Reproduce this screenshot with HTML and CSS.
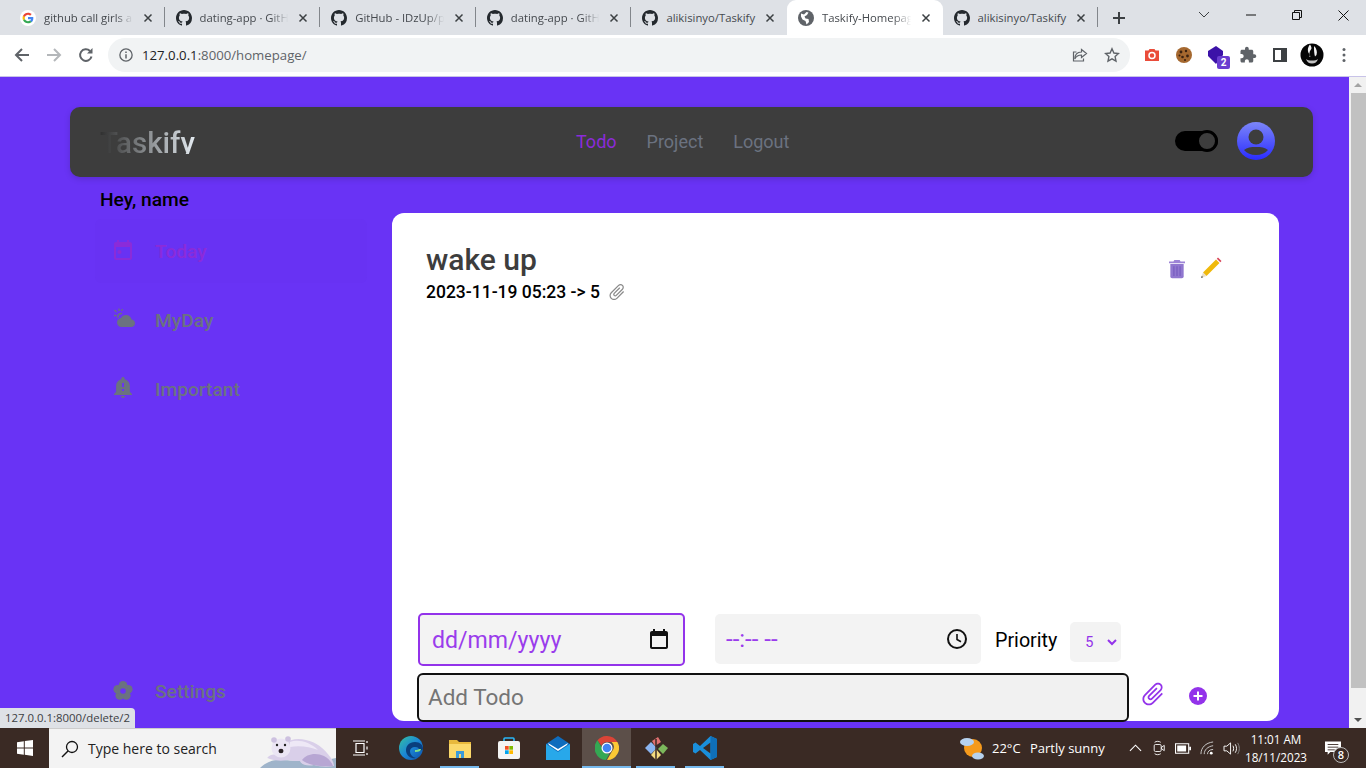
FILE: index.html
```html
<!DOCTYPE html>
<html lang="en">
<head>
    <meta charset="UTF-8">
    <title>Taskify-Homepage</title>
    <link rel="stylesheet" href="styles.css">
</head>
<body>
<svg class="defs" width="0" height="0">
    <symbol id="gh" viewBox="0 0 16 16"><path d="M8 0C3.58 0 0 3.58 0 8c0 3.54 2.29 6.53 5.47 7.59.4.07.55-.17.55-.41 0-.22-.01-.82-.01-1.49-2.01.37-2.53-.49-2.69-.94-.09-.23-.48-.94-.82-1.13-.28-.15-.68-.52-.01-.53.63-.01 1.08.58 1.23.82.72 1.21 1.87.87 2.33.66.07-.52.28-.87.51-1.07-1.78-.2-3.64-.89-3.64-3.95 0-.87.31-1.59.82-2.15-.08-.2-.36-1.02.08-2.12 0 0 .67-.21 2.2.82.64-.18 1.32-.27 2-.27.68 0 1.36.09 2 .27 1.53-1.04 2.2-.82 2.2-.82.44 1.1.16 1.92.08 2.12.51.56.82 1.27.82 2.15 0 3.07-1.87 3.75-3.65 3.95.29.25.54.73.54 1.48 0 1.07-.01 1.93-.01 2.2 0 .21.15.46.55.38A8.013 8.013 0 0016 8c0-4.42-3.58-8-8-8z"/></symbol>
    <symbol id="x" viewBox="0 0 10 10"><path d="M1.5 1.5l7 7M8.5 1.5l-7 7" stroke="currentColor" stroke-width="1.5" fill="none"/></symbol>
    <symbol id="clip" viewBox="0 0 24 24"><path transform="rotate(45 12 12)" d="M16.5 6v11.5c0 2.21-1.79 4-4 4s-4-1.79-4-4V5c0-1.38 1.12-2.5 2.5-2.5s2.5 1.12 2.5 2.5v10.5c0 .55-.45 1-1 1s-1-.45-1-1V6H10v9.5c0 1.38 1.12 2.5 2.5 2.5s2.5-1.12 2.5-2.5V5c0-2.21-1.79-4-4-4S7 2.79 7 5v12.5c0 3.04 2.46 5.5 5.5 5.5s5.5-2.46 5.5-5.5V6h-1.5z"/></symbol>
</svg>

<!-- browser chrome -->
<div class="tabstrip">
    <div class="tab">
        <svg class="favicon" viewBox="0 0 24 24"><circle cx="12" cy="12" r="12" fill="#fff"/><path d="M20 12.2c0-.6-.1-1.1-.2-1.6H12v3.1h4.5c-.2 1-.8 1.900-1.700 2.500l2.700 2.100c1.600-1.500 2.500-3.600 2.500-6.100z" fill="#4285f4"/><path d="M12 20c2.200 0 4-.7 5.500-2l-2.700-2.100c-.7.500-1.700.8-2.800.8-2.100 0-3.900-1.400-4.600-3.300L4.600 15.500C6 18.200 8.800 20 12 20z" fill="#34a853"/><path d="M7.400 13.400c-.4-1.100-.4-1.900 0-3L4.600 8.200c-.9 1.900-.9 5.400 0 7.300z" fill="#fbbc05"/><path d="M12 7.300c1.200 0 2.300.4 3.100 1.200l2.400-2.400C16 4.800 14.200 4 12 4 8.800 4 6 5.800 4.600 8.500l2.800 2.100c.7-1.900 2.500-3.300 4.600-3.300z" fill="#ea4335"/></svg>
        <span class="tab-title">github call girls a</span>
        <svg class="tab-x"><use href="#x"/></svg>
    </div>
    <div class="tab">
        <svg class="favicon"><use href="#gh"/></svg>
        <span class="tab-title">dating-app · GitHub</span>
        <svg class="tab-x"><use href="#x"/></svg>
    </div>
    <div class="tab">
        <svg class="favicon"><use href="#gh"/></svg>
        <span class="tab-title">GitHub - IDzUp/pro</span>
        <svg class="tab-x"><use href="#x"/></svg>
    </div>
    <div class="tab">
        <svg class="favicon"><use href="#gh"/></svg>
        <span class="tab-title">dating-app · GitHub</span>
        <svg class="tab-x"><use href="#x"/></svg>
    </div>
    <div class="tab tab-nosep">
        <svg class="favicon"><use href="#gh"/></svg>
        <span class="tab-title tab-title-full">alikisinyo/Taskify</span>
        <svg class="tab-x"><use href="#x"/></svg>
    </div>
    <div class="tab tab-active">
        <svg class="favicon" viewBox="0 0 16 16"><circle cx="8" cy="8" r="8" fill="#5f6368"/><path d="M3 3.500l3 1 2.500-2.500 2 .5-1.500 2.500-2.500 1.500 1 2 3 .5 .5 3-2.500 2.500-1-3.500-3-1.500-1.500-3z" fill="#fff"/></svg>
        <span class="tab-title">Taskify-Homepage</span>
        <svg class="tab-x"><use href="#x"/></svg>
    </div>
    <div class="tab">
        <svg class="favicon"><use href="#gh"/></svg>
        <span class="tab-title tab-title-full">alikisinyo/Taskify</span>
        <svg class="tab-x"><use href="#x"/></svg>
    </div>
    <svg class="newtab" viewBox="0 0 14 14"><path d="M7 1v12M1 7h12" stroke="#3c4043" stroke-width="2"/></svg>
    <div class="winctl">
        <span class="winbtn winbtn-chevron"><svg viewBox="0 0 12 8" width="12" height="8"><path d="M1 1l5 5 5-5" fill="none" stroke="#3c4043"/></svg></span>
        <span class="winbtn"><svg viewBox="0 0 10 10" width="10" height="10"><path d="M0 5h10" stroke="#111"/></svg></span>
        <span class="winbtn"><svg viewBox="0 0 10 10" width="10" height="10"><path d="M.5 2.500h7v7h-7zM2.500 2.500v-2h7v7h-2" fill="none" stroke="#111"/></svg></span>
        <span class="winbtn"><svg viewBox="0 0 11 11" width="11" height="11"><path d="M.5.5l10 10M10.500.5l-10 10" stroke="#111"/></svg></span>
    </div>
</div>

<div class="toolbar">
    <span class="navbtn"><svg viewBox="0 0 16 16" width="16" height="16"><path d="M15 8H2.500M8 2L2 8l6 6" fill="none" stroke="#5f6368" stroke-width="2"/></svg></span>
    <span class="navbtn"><svg viewBox="0 0 16 16" width="16" height="16"><path d="M1 8h12.500M8 2l6 6-6 6" fill="none" stroke="#b4b7ba" stroke-width="2"/></svg></span>
    <span class="navbtn"><svg viewBox="0 0 16 16" width="16" height="16"><path d="M13.500 9.500A5.800 5.800 0 1 1 12 4" fill="none" stroke="#5f6368" stroke-width="2"/><path d="M14.500 1v5.500H9z" fill="#5f6368"/></svg></span>
    <div class="omnibox">
        <svg class="omni-info" viewBox="0 0 16 16" width="14" height="14"><circle cx="8" cy="8" r="7" fill="none" stroke="#5f6368" stroke-width="1.500"/><path d="M8 7v5M8 4v1.800" stroke="#5f6368" stroke-width="1.700"/></svg>
        <span class="url"><b>127.0.0.1</b>:8000/homepage/</span>
        <svg class="omni-share" viewBox="0 0 16 16" width="16" height="16"><path d="M9.500 2.500l5 4-5 4V8C6 8 4 9.500 2.800 12c0-4 2.500-6.800 6.700-7z" fill="none" stroke="#5f6368" stroke-width="1.200"/><path d="M11.500 11.500v2.500H1.500V5h3" fill="none" stroke="#5f6368" stroke-width="1.200"/></svg>
        <svg class="omni-star" viewBox="0 0 16 16" width="16" height="16"><path d="M8 1.800l1.900 4.200 4.600.5-3.400 3.100.9 4.600L8 11.900l-4 2.300.9-4.600-3.400-3.100 4.600-.5z" fill="none" stroke="#5f6368" stroke-width="1.400"/></svg>
    </div>
    <div class="extensions">
        <span class="ext"><svg viewBox="0 0 16 16" width="16" height="16"><path d="M1 3.500h3.500L5.500 2h5l1 1.500H15V14H1z" fill="#ea4c3a"/><circle cx="8" cy="8.500" r="3" fill="none" stroke="#fff" stroke-width="1.500"/></svg></span>
        <span class="ext"><svg viewBox="0 0 18 18" width="18" height="18"><circle cx="9" cy="9" r="8" fill="#a5682f"/><circle cx="6" cy="6" r="1.400" fill="#3b2210"/><circle cx="11" cy="5" r="1.200" fill="#3b2210"/><circle cx="12.500" cy="10" r="1.400" fill="#3b2210"/><circle cx="7.500" cy="11" r="1.300" fill="#3b2210"/><circle cx="10" cy="14" r="1" fill="#3b2210"/><circle cx="4.500" cy="9.500" r="1" fill="#3b2210"/></svg></span>
        <span class="ext ext-badged">
            <svg viewBox="0 0 18 18" width="18" height="18"><path d="M9 0l7 5v4l-7 9-8-8V5z" fill="#3c12a8"/></svg>
            <span class="ext-badge">2</span>
        </span>
        <span class="ext"><svg viewBox="0 0 24 24" width="18" height="18"><path d="M20.500 11H19V7c0-1.100-.9-2-2-2h-4V3.500C13 2.120 11.880 1 10.500 1S8 2.120 8 3.500V5H4c-1.100 0-2 .9-2 2v3.800h1.500c1.490 0 2.700 1.210 2.700 2.700s-1.210 2.700-2.700 2.700H2V20c0 1.100.9 2 2 2h3.800v-1.500c0-1.490 1.210-2.700 2.700-2.700s2.700 1.210 2.700 2.700V22H17c1.100 0 2-.9 2-2v-4h1.500c1.380 0 2.500-1.120 2.500-2.500S21.880 11 20.500 11z" fill="#5f6368"/></svg></span>
        <span class="ext"><svg viewBox="0 0 14 14" width="14" height="14"><path d="M1 1h12v12H1z" fill="none" stroke="#3c4043" stroke-width="2"/><path d="M8 1h5v12H8z" fill="#3c4043"/></svg></span>
        <span class="ext"><svg viewBox="0 0 24 24" width="24" height="24"><circle cx="12" cy="12" r="11.500" fill="#050505"/><path d="M10 1.500C7 5 7.500 9 9.500 11c1.200 1.200.6 2.500-.7 3h1.700C8.800 11 9.500 8 11 6.500c1-1 .5-3-1-5z" fill="#f2f2f2"/><path d="M14 3c2.500 2 3.500 6 2.500 9l-1.500 1.500c-1-3-1-7-1-10.500z" fill="#f2f2f2"/><path d="M6 16c1.500 1 3 1.500 6 1.500s4.500-.5 6-1.500c-1 3-3 4.500-6 4.500S7 19 6 16z" fill="#c4c4c4"/></svg></span>
        <span class="ext"><svg viewBox="0 0 4 16" width="4" height="16"><circle cx="2" cy="2.500" r="1.500" fill="#5f6368"/><circle cx="2" cy="8" r="1.500" fill="#5f6368"/><circle cx="2" cy="13.500" r="1.500" fill="#5f6368"/></svg></span>
    </div>
</div>

<!-- the page itself -->
<div class="viewport">
    <div class="app">
        <nav class="navbar">
            <div class="brand">Taskify</div>
            <div class="nav-links">
                <a class="nav-link nav-link-active">Todo</a>
                <a class="nav-link">Project</a>
                <a class="nav-link">Logout</a>
            </div>
            <div class="nav-right">
                <span class="toggle"><span class="knob"></span></span>
                <svg class="avatar" viewBox="0 0 38 38" width="38" height="38">
                    <defs><linearGradient id="av" x1="0" y1="0" x2="0" y2="1"><stop offset="0" stop-color="#7c86f8"/><stop offset="1" stop-color="#2a2cff"/></linearGradient></defs>
                    <circle cx="19" cy="19" r="19" fill="url(#av)"/>
                    <circle cx="19" cy="15" r="7.500" fill="#3d3d3d"/>
                    <path d="M7 28c3-2.500 7-3 12-3s9 .5 12 3c-3 3.500-7 5-12 5s-9-1.500-12-5z" fill="#3d3d3d"/>
                </svg>
            </div>
        </nav>

        <div class="content">
            <aside class="sidebar">
                <div class="greeting">Hey, name</div>
                <div class="side-item side-item-active">
                    <svg class="side-icon" viewBox="0 0 24 24"><path d="M19 3h-1V1h-2v2H8V1H6v2H5c-1.110 0-1.990.9-1.990 2L3 19c0 1.100.89 2 2 2h14c1.100 0 2-.9 2-2V5c0-1.100-.9-2-2-2zm0 16H5V8h14v11z"/><circle cx="8.500" cy="13" r="2"/></svg>
                    <span>Today</span>
                </div>
                <div class="side-item">
                    <svg class="side-icon" viewBox="0 0 24 24"><path transform="translate(6 4) scale(.75)" d="M19.350 10.040C18.670 6.590 15.640 4 12 4 9.110 4 6.600 5.640 5.350 8.040 2.340 8.360 0 10.910 0 14c0 3.310 2.690 6 6 6h13c2.760 0 5-2.240 5-5 0-2.640-2.050-4.780-4.650-4.960z"/><path d="M8 .5V3M3.500 2l2 2M3 7.500h2.500M11.500 1l-1 2" stroke="currentColor" stroke-width="1.300" fill="none"/><path d="M7 10a3.500 3.500 0 0 1 4-4.500" stroke="currentColor" stroke-width="1.500" fill="none"/></svg>
                    <span>MyDay</span>
                </div>
                <div class="side-item">
                    <svg class="side-icon" viewBox="0 2 24 24"><path d="M10.010 21.010c0 1.100.89 1.990 1.990 1.990s1.990-.89 1.990-1.990h-3.980zm8.870-4.190V11c0-3.250-2.250-5.970-5.290-6.690v-.72C13.590 2.710 12.880 2 12 2s-1.590.71-1.590 1.590v.72C7.370 5.030 5.120 7.750 5.120 11v5.820L3 18.940V20h18v-1.060l-2.120-2.120zM13 16h-2v-2h2v2zm0-4h-2V8h2v4z"/></svg>
                    <span>Important</span>
                </div>
                <div class="side-item side-item-bottom">
                    <svg class="side-icon" viewBox="0 0 24 24"><circle cx="12" cy="6.400" r="4.300"/><circle cx="17.300" cy="10.300" r="4.300"/><circle cx="15.300" cy="16.500" r="4.300"/><circle cx="8.700" cy="16.500" r="4.300"/><circle cx="6.700" cy="10.300" r="4.300"/><circle cx="12" cy="12" r="5"/><circle cx="12" cy="12" r="2.800" fill="#6933f5"/></svg>
                    <span>Settings</span>
                </div>
            </aside>

            <main class="card">
                <div class="todo-list">
                    <div class="todo">
                        <div class="todo-text">
                            <h2 class="todo-title">wake up</h2>
                            <div class="todo-meta">
                                <span>2023-11-19 05:23 -&gt; 5</span>
                                <svg class="todo-clip"><use href="#clip"/></svg>
                            </div>
                        </div>
                        <div class="todo-actions">
                            <svg viewBox="0 0 18 22" width="16" height="21"><path d="M6 1.500h6l1 1.500h5v2H0V3h5z" fill="#9d84d6"/><path d="M1.500 6h15v14a2 2 0 0 1-2 2h-11a2 2 0 0 1-2-2z" fill="#9077cf"/><path d="M5.500 8.500v11M9 8.500v11M12.500 8.500v11" stroke="#7a5fc0" stroke-width="1.500"/></svg>
                            <svg viewBox="0 0 22 22" width="22" height="22"><path d="M16 2.500l3.500 3.500L6.500 19 3 15.500z" fill="#f0b90b"/><path d="M16.800 1.700l3.500 3.500 1.200-1.200-3.500-3.500z" fill="#d8475a"/><path d="M3 15.500L1 21l5.500-2z" fill="#eadfc8"/><path d="M1.800 18.800L1 21l2.200-.8z" fill="#555"/></svg>
                        </div>
                    </div>
                </div>

                <form class="todo-form">
                    <div class="form-row">
                        <div class="field field-date">
                            <span class="field-text">dd/mm/yyyy</span>
                            <svg viewBox="0 0 24 24" width="24" height="24"><path d="M19 3h-1V1h-2v2H8V1H6v2H5c-1.110 0-2 .9-2 2v14c0 1.100.89 2 2 2h14c1.100 0 2-.9 2-2V5c0-1.100-.9-2-2-2zm0 16H5V8h14v11z" fill="#111"/></svg>
                        </div>
                        <div class="field field-time">
                            <span>--:-- --</span>
                            <svg viewBox="0 0 24 24" width="24" height="24"><circle cx="12" cy="12" r="9" fill="none" stroke="#111" stroke-width="2"/><path d="M12 7v5.500l4 2.300" fill="none" stroke="#111" stroke-width="1.600"/></svg>
                        </div>
                        <label class="priority-label">Priority</label>
                        <div class="priority-select">
                            <span>5</span>
                            <svg viewBox="0 0 10 7" width="10" height="7"><path d="M1 1l4 4 4-4" fill="none" stroke="#9333ea" stroke-width="2"/></svg>
                        </div>
                    </div>
                    <div class="form-row form-row-add">
                        <input class="add-input" type="text" placeholder="Add Todo">
                        <svg class="add-clip"><use href="#clip"/></svg>
                        <svg class="add-plus" viewBox="0 0 20 20" width="20" height="20"><circle cx="10" cy="10" r="9" fill="#9333ea"/><path d="M10 5.500v9M5.500 10h9" stroke="#fff" stroke-width="2"/></svg>
                    </div>
                </form>
            </main>
        </div>
    </div>

    <div class="scrollbar">
        <span class="arrow arrow-up"></span>
        <span class="thumb"></span>
        <span class="arrow arrow-down"></span>
    </div>

    <div class="status-bubble">127.0.0.1:8000/delete/2</div>
</div>

<!-- windows taskbar -->
<div class="taskbar">
    <span class="start"><svg viewBox="0 0 16 16" width="16" height="16"><path d="M0 2.200L6.800 1.200v6.400H0zM7.800 1l8.200-1v7.600H7.800zM0 8.500h6.800v6.300L0 13.800zM7.800 8.500H16V16l-8.200-1.200z" fill="#fff"/></svg></span>
    <div class="search">
        <svg viewBox="0 0 18 18" width="18" height="18"><circle cx="11" cy="7" r="5.500" fill="none" stroke="#111" stroke-width="1.300"/><path d="M7 11l-6 6" stroke="#111" stroke-width="1.500"/></svg>
        <span class="search-text">Type here to search</span>
        <svg class="bear" viewBox="0 0 76 38" width="76" height="38">
            <path d="M0 38c6-6 14-9 24-8 16 1 32 3 52-2v10z" fill="#9fb4ca"/>
            <path d="M8 27c3-3 8-3 13-3l3-10c6-5 14-6 22-4 10 2 18 8 25 18 2 3 3 6 3 8-6 1-14 1-20-1-4 1-12 1-14-4-4 0-8 0-12-1-6 1-12 1-18-1-3-1-3-1-2-2z" fill="#d9cfe9"/>
            <path d="M42 30c4-6 14-8 22-4 4 2 7 5 9 10-10 1-24 0-31-6z" fill="#b7a6d3"/>
            <path d="M30 12c8-3 20 0 28 8-8-3-18-5-28-3z" fill="#eee8f6"/>
            <circle cx="21" cy="18" r="9.500" fill="#ebe5f4"/>
            <circle cx="14" cy="10" r="2.800" fill="#cdc1e0"/><circle cx="28" cy="9" r="2.800" fill="#cdc1e0"/>
            <circle cx="17" cy="15" r="1.200" fill="#222"/><circle cx="25" cy="15" r="1.200" fill="#222"/>
            <ellipse cx="21" cy="21" rx="2.500" ry="2.200" fill="#2a2226"/>
        </svg>
    </div>
    <span class="task task-view"><svg viewBox="0 0 16 16" width="16" height="16"><path d="M3 3.500h8v9H3zM0 1h12M0 15h12M14 1v2M14 6.500v3M14 13v2" fill="none" stroke="#fff" stroke-width="1.200"/></svg></span>
    <span class="task">
        <svg viewBox="0 0 24 24" width="24" height="24"><defs><linearGradient id="edge" x1="0" y1="0" x2="1" y2="1"><stop offset="0" stop-color="#35c1a0"/><stop offset=".5" stop-color="#1b87d6"/><stop offset="1" stop-color="#0c4fa8"/></linearGradient></defs><circle cx="12" cy="12" r="12" fill="url(#edge)"/><path d="M24 13c0-4-3-7-8-7-6 0-9 4-9 8 0 5 4 9 10 8-4-1-6-4-6-7 0-2 2-4 5-4s4 1 4 3c2 1 4 0 4-1z" fill="#0a3f7d"/><path d="M21 13c0 1-2 2-5 2" stroke="#7fe08a" stroke-width="2" fill="none"/></svg>
    </span>
    <span class="task task-on">
        <svg viewBox="0 0 24 20" width="24" height="20"><path d="M1 2h8l2 2h12v15a1 1 0 0 1-1 1H2a1 1 0 0 1-1-1z" fill="#e8b93c"/><path d="M1 6h22v13a1 1 0 0 1-1 1H2a1 1 0 0 1-1-1z" fill="#fbd96b"/><path d="M8 20v-7h8v7h-3v-4h-2v4z" fill="#3a9bd9"/></svg>
    </span>
    <span class="task">
        <svg viewBox="0 0 24 24" width="24" height="24"><path d="M7 6V3a1 1 0 0 1 1-1h8a1 1 0 0 1 1 1v3" fill="none" stroke="#29b6f6" stroke-width="1.600"/><rect x="1" y="5" width="22" height="18" rx="2" fill="#f4f4f4"/><path d="M8 10h3.700v3.700H8z" fill="#f25022"/><path d="M12.300 10H16v3.700h-3.700z" fill="#7fba00"/><path d="M8 14.300h3.700V18H8z" fill="#00a4ef"/><path d="M12.300 14.300H16V18h-3.700z" fill="#ffb900"/></svg>
    </span>
    <span class="task">
        <svg viewBox="0 0 24 24" width="24" height="24"><path d="M0 8L12 0l12 8v16H0z" fill="#0f6cbd"/><path d="M0 8l12 8 12-8v16H0z" fill="#28a8ea"/><path d="M2 7l10 6 10-6-1 2-9 6-9-6z" fill="#fff"/></svg>
    </span>
    <span class="task task-on task-active">
        <svg viewBox="0 0 24 24" width="24" height="24"><path d="M12 0a12 12 0 0 1 10.400 6H12a6 6 0 0 0-5.600 3.700L2.500 4.300A12 12 0 0 1 12 0z" fill="#db4437"/><path d="M22.400 6A12 12 0 0 1 12 24l5.200-9a6 6 0 0 0-.7-9z" fill="#fcc934"/><path d="M2.500 4.300L7 12a6 6 0 0 0 7.500 5.500L10.900 24A12 12 0 0 1 2.500 4.300z" fill="#34a853"/><circle cx="12" cy="12" r="5.500" fill="#fff"/><circle cx="12" cy="12" r="4.300" fill="#4285f4"/></svg>
    </span>
    <span class="task task-on">
        <svg viewBox="0 0 24 24" width="24" height="24"><path d="M1 12l6-6 6 6-6 6z" fill="#8ab4f0"/><path d="M11 10l-3-5 6-4 3 5z" fill="#e07070"/><path d="M14 13l5-5 5 4-5 6z" fill="#7cb85c"/><path d="M7 19l5-6 5 6-5 5z" fill="#f4dc80"/><path d="M12 3v21" stroke="#3a2a24" stroke-width="1.500"/></svg>
    </span>
    <span class="task task-on">
        <svg viewBox="0 0 24 24" width="24" height="24"><path d="M17.500 0L24 3v18l-6.500 3L7 14l-4.500 3.500L0 16V8l2.500-1.500L7 10z" fill="#1a8fdb"/><path d="M17.500 6.500L10 12l7.500 5.500z" fill="#3a2a24"/><path d="M17.500 0L24 3v18l-6.500 3z" fill="#0f6fb8"/></svg>
    </span>

    <div class="tray">
        <svg class="weather" viewBox="0 0 24 24" width="24" height="24"><circle cx="13" cy="12" r="9" fill="#f59a1c"/><ellipse cx="7" cy="6" rx="7" ry="4" fill="#b6d2ef"/><ellipse cx="18" cy="20" rx="6" ry="3.500" fill="#b6d2ef"/></svg>
        <span class="temp">22°C</span>
        <span class="weather-text">Partly sunny</span>
        <span class="tray-icon"><svg viewBox="0 0 14 8" width="13" height="8"><path d="M1 7l6-6 6 6" fill="none" stroke="#fff" stroke-width="1.200"/></svg></span>
        <span class="tray-icon"><svg viewBox="0 0 16 18" width="14" height="16"><rect x="2.500" y="5" width="8" height="8" rx="1.500" fill="none" stroke="#fff"/><path d="M11 8l3-2v6l-3-2zM3 2.500C5 1 8 1 10 2.500M3 15.500c2 1.500 5 1.500 7 0" fill="none" stroke="#fff"/></svg></span>
        <span class="tray-icon"><svg viewBox="0 0 18 12" width="16" height="11"><path d="M.6.6h14.800v10.800H.6z" fill="none" stroke="#fff" stroke-width="1.200"/><path d="M2.500 2.500h10v7h-10zM16 4h2v4h-2z" fill="#fff"/></svg></span>
        <span class="tray-icon"><svg viewBox="0 0 16 16" width="15" height="15"><path d="M1 14C1 7 6 2 14 1M4.500 14c0-4.500 3.500-8 9.500-9M8 14c0-2.500 2-5 6-5" fill="none" stroke="#cfcfcf" stroke-width="1"/><circle cx="12" cy="13" r="1.500" fill="#fff"/></svg></span>
        <span class="tray-icon"><svg viewBox="0 0 18 16" width="17" height="15"><path d="M1 5.500h3L8 2v12L4 10.500H1z" fill="none" stroke="#fff"/><path d="M10.500 5c1 1.500 1 4.500 0 6M13 3.500c1.800 2.500 1.800 6.500 0 9" fill="none" stroke="#fff"/><path d="M15.500 2c2.400 3.500 2.400 8.500 0 12" fill="none" stroke="#888"/></svg></span>
        <div class="clock"><span>11:01 AM</span><span>18/11/2023</span></div>
        <span class="notify">
            <svg viewBox="0 0 18 16" width="16" height="15"><path d="M0 0h18v12H6l-3 3v-3H0z" fill="#fff"/><path d="M3 3.500h12M3 6.500h12M3 9.500h8" stroke="#3a2a24"/></svg>
            <span class="notify-count">8</span>
        </span>
    </div>
</div>
</body>
</html>
```

FILE: styles.css
```css
/* Reset and base styles */
* {
    box-sizing: border-box;
    margin: 0;
    padding: 0;
}

html, body {
    width: 1366px;
    height: 768px;
    overflow: hidden;
}

body {
    display: flex;
    flex-direction: column;
    font-family: Roboto, "Noto Sans", sans-serif;
    background-color: #fff;
}

.defs {
    position: absolute;
}

/* Tab strip */
.tabstrip {
    display: flex;
    align-items: stretch;
    height: 35px;
    padding-left: 9px;
    background-color: #dee1e6;
    font-family: "Open Sans", sans-serif;
    font-size: 11.3px;
    color: #45494e;
}

.tab {
    position: relative;
    display: flex;
    align-items: center;
    width: 155.6px;
    padding: 0 11px 0 11px;
}

.tab::after {
    content: "";
    position: absolute;
    right: 0;
    top: 7px;
    height: 20px;
    width: 1px;
    background-color: #82868b;
}

.tab-nosep::after,
.tab-active::after {
    display: none;
}

.tab-active {
    background-color: #fff;
    border-radius: 9px 9px 0 0;
}

.favicon {
    flex: none;
    width: 16px;
    height: 16px;
    margin-right: 8px;
    fill: #24292e;
}

.tab-title {
    flex: 1;
    min-width: 0;
    white-space: nowrap;
    overflow: hidden;
    -webkit-mask-image: linear-gradient(to right, #000 78%, transparent 98%);
    mask-image: linear-gradient(to right, #000 78%, transparent 98%);
}

.tab-title-full {
    -webkit-mask-image: none;
    mask-image: none;
}

.tab-x {
    flex: none;
    width: 10px;
    height: 10px;
    margin: 0 1px 0 8px;
    color: #3c4043;
}

.newtab {
    align-self: center;
    width: 14px;
    height: 14px;
    margin-left: 14px;
}

.winctl {
    display: flex;
    margin-left: auto;
}

.winbtn {
    display: flex;
    align-items: center;
    justify-content: center;
    width: 46px;
    height: 30px;
}

.winbtn-chevron {
    margin-right: 1px;
}

/* Toolbar */
.toolbar {
    display: flex;
    align-items: center;
    height: 42px;
    padding: 0 6px 1px;
    border-bottom: 1px solid #c8c3e8;
    background-color: #fff;
}

.navbtn {
    display: flex;
    align-items: center;
    justify-content: center;
    width: 32px;
    height: 32px;
}

.omnibox {
    display: flex;
    align-items: center;
    width: 1022px;
    height: 34px;
    margin-left: 6px;
    padding: 0 10px 0 11px;
    border-radius: 17px;
    background-color: #f1f3f4;
}

.url {
    flex: 1;
    margin-left: 9px;
    font-family: "Open Sans", sans-serif;
    font-size: 13.2px;
    color: #5f6368;
}

.url b {
    font-weight: 400;
    color: #202124;
}

.omni-share {
    margin-right: 16px;
}

.extensions {
    display: flex;
    margin-left: 6px;
}

.ext {
    position: relative;
    display: flex;
    align-items: center;
    justify-content: center;
    width: 32px;
    height: 32px;
}

.ext-badge {
    position: absolute;
    right: 2px;
    bottom: 2px;
    width: 13px;
    height: 13px;
    border-radius: 2px;
    background-color: #6a3dd0;
    color: #fff;
    font-size: 10px;
    font-weight: 700;
    line-height: 13px;
    text-align: center;
}

/* Page area */
.viewport {
    position: relative;
    display: flex;
    flex: 1;
    min-height: 0;
    background-color: #6933f5;
}

.app {
    display: flex;
    flex-direction: column;
    flex: 1;
    min-width: 0;
    padding: 30px 36px 0 70px;
}

.navbar {
    display: flex;
    align-items: center;
    flex: none;
    height: 70px;
    padding: 0 38px 0 30px;
    border-radius: 10px;
    background-color: #3d3d3d;
    box-shadow: 0 2px 6px rgba(0, 0, 0, 0.15);
}

.brand {
    width: 96px;
    height: 24px;
    margin-right: 380px;
    overflow: hidden;
    font-size: 29.5px;
    font-weight: 500;
    line-height: 26px;
    white-space: nowrap;
    background-image: linear-gradient(to right, #2f2f2f, #e6edf3);
    -webkit-background-clip: text;
    background-clip: text;
    color: transparent;
}

.nav-links {
    display: flex;
    gap: 30px;
    margin-top: -2px;
}

.nav-link {
    font-size: 18px;
    color: #6b7280;
}

.nav-link-active {
    color: #8b2bd9;
}

.nav-right {
    display: flex;
    align-items: center;
    gap: 19px;
    margin-top: -2px;
    margin-left: auto;
}

.toggle {
    position: relative;
    display: block;
    width: 43px;
    height: 20px;
    border-radius: 10px;
    background-color: #000;
}

.knob {
    position: absolute;
    right: 0;
    top: -1px;
    width: 22px;
    height: 22px;
    border: 3px solid #000;
    border-radius: 50%;
    background-color: #3d3d3d;
}

.content {
    display: flex;
    flex: 1;
    min-height: 0;
}

/* Sidebar */
.sidebar {
    display: flex;
    flex-direction: column;
    flex: none;
    width: 322px;
    padding: 12px 25px 5px 25px;
}

.greeting {
    height: 30px;
    margin-left: 5px;
    font-size: 19.2px;
    font-weight: 500;
    line-height: 22px;
    color: #000;
}

.side-item {
    display: flex;
    align-items: center;
    gap: 20px;
    height: 64px;
    margin-bottom: 5px;
    padding-left: 16px;
    font-size: 19.2px;
    font-weight: 500;
    color: #6b7280;
}

.side-item-active {
    border-radius: 6px;
    background-color: #6832f3;
    color: #8b2bd9;
}

.side-item-bottom {
    margin-top: auto;
    margin-bottom: 0;
}

.side-icon {
    flex: none;
    width: 24px;
    height: 24px;
    fill: currentColor;
}

/* Main card */
.card {
    display: flex;
    flex-direction: column;
    flex: none;
    width: 887px;
    height: 508px;
    margin-top: 36px;
    border-radius: 12px;
    background-color: #fff;
}

.todo-list {
    flex: 1;
    padding: 29px 57px 0 34px;
}

.todo {
    display: flex;
    justify-content: space-between;
}

.todo-title {
    font-size: 30px;
    font-weight: 500;
    line-height: 35px;
    color: #3d3d3d;
}

.todo-meta {
    display: flex;
    align-items: center;
    gap: 7px;
    margin-top: 3px;
    font-size: 17.5px;
    font-weight: 500;
    line-height: 24px;
    color: #000;
}

.todo-clip {
    width: 20px;
    height: 20px;
    fill: #8a8a8a;
}

.todo-actions {
    display: flex;
    align-items: center;
    gap: 15px;
    height: 22px;
    margin-top: 15px;
}

/* Add todo form */
.todo-form {
    display: flex;
    flex-direction: column;
    gap: 7px;
    margin-bottom: -1px;
    padding-left: 25px;
}

.form-row {
    display: flex;
    align-items: center;
}

.field {
    display: flex;
    align-items: center;
    justify-content: space-between;
    border-radius: 5px;
    background-color: #f3f3f3;
    color: #9a3cec;
}

.field-date {
    width: 267px;
    height: 53px;
    margin-left: 1px;
    padding: 0 12px;
    border: 2px solid #9333ea;
    font-size: 23.1px;
}

.field-text {
    margin-top: 1px;
}

.field-time {
    align-self: flex-start;
    width: 266px;
    height: 50px;
    margin-top: 1px;
    margin-left: 30px;
    padding: 0 12px 0 11px;
    font-size: 24px;
}

.priority-label {
    margin-top: 2px;
    margin-left: 14px;
    font-size: 19.7px;
    color: #000;
}

.priority-select {
    display: flex;
    align-items: center;
    justify-content: space-between;
    width: 51px;
    height: 40px;
    margin: 5px 0 0 13px;
    padding: 0 4px 0 15px;
    border-radius: 5px;
    background-color: #f3f3f3;
    font-size: 14.5px;
    color: #9333ea;
}

.form-row-add {
    height: 49px;
}

.add-input {
    width: 712px;
    height: 49px;
    padding: 0 9px 2px;
    border: 2px solid #111;
    border-radius: 6px;
    outline: none;
    background-color: #f1f1f1;
    font-family: Roboto, sans-serif;
    font-size: 22.5px;
}

.add-input::placeholder {
    color: #757575;
}

.add-clip {
    width: 28px;
    height: 28px;
    margin: -7px 0 0 10px;
    fill: #9333ea;
}

.add-plus {
    margin: -4px 0 0 21px;
}

/* Scrollbar */
.scrollbar {
    display: flex;
    flex-direction: column;
    align-items: stretch;
    flex: none;
    width: 17px;
    padding-left: 2px;
    background-color: #f1f1f1;
}

.thumb {
    flex: none;
    height: 595px;
    background-color: #c1c1c1;
}

.arrow {
    position: relative;
    flex: none;
    height: 16px;
}

.arrow-down {
    margin-top: auto;
}

.arrow::after {
    content: "";
    position: absolute;
    left: 3px;
    top: 6px;
    border-left: 4px solid transparent;
    border-right: 4px solid transparent;
}

.arrow-up::after {
    border-bottom: 4px solid #a3a3a3;
}

.arrow-down::after {
    border-top: 4px solid #505050;
}

.status-bubble {
    position: absolute;
    left: 0;
    bottom: 0;
    width: 135px;
    height: 20px;
    padding-left: 5px;
    border-top-right-radius: 4px;
    background-color: #dee1e6;
    font-family: "Open Sans", sans-serif;
    font-size: 11.4px;
    line-height: 20px;
    color: #3c4043;
    white-space: nowrap;
}

/* Taskbar */
.taskbar {
    display: flex;
    flex: none;
    height: 40px;
    background-color: #3a2a24;
    font-family: "Open Sans", sans-serif;
    color: #fff;
}

.start {
    display: flex;
    align-items: center;
    justify-content: center;
    width: 49px;
}

.search {
    display: flex;
    align-items: center;
    width: 287px;
    padding-left: 12px;
    overflow: hidden;
    border-top: 1px solid #ccc;
    background-color: #f3f3f3;
    color: #222;
}

.search-text {
    margin-left: 9px;
    font-size: 14px;
    white-space: nowrap;
}

.bear {
    flex: none;
    margin-left: auto;
}

.task {
    position: relative;
    display: flex;
    align-items: center;
    justify-content: center;
    width: 49px;
}

.task-view {
    width: 50px;
}

.task-on::after {
    content: "";
    position: absolute;
    left: 5px;
    right: 5px;
    bottom: 0;
    height: 2px;
    background-color: #76b9ed;
}

.task-active {
    background-color: #5c4f49;
}

.task-active::after {
    left: 0;
    right: 0;
}

.tray {
    display: flex;
    align-items: center;
    margin-left: auto;
    padding-right: 13px;
    font-size: 13px;
}

.weather {
    margin-right: 8px;
}

.temp {
    width: 38px;
}

.weather-text {
    width: 93px;
    white-space: nowrap;
}

.tray-icon {
    display: flex;
    align-items: center;
    justify-content: center;
    width: 24px;
}

.clock {
    display: flex;
    flex-direction: column;
    align-items: center;
    width: 66px;
    margin-right: 4px;
    font-size: 11.7px;
    line-height: 18px;
}

.notify {
    position: relative;
    display: flex;
    justify-content: center;
    width: 40px;
}

.notify-count {
    position: absolute;
    left: 20px;
    top: 6px;
    width: 16px;
    height: 16px;
    border: 1px solid #bbb;
    border-radius: 50%;
    background-color: #3a2a24;
    font-size: 11px;
    font-weight: 600;
    line-height: 14px;
    text-align: center;
}
```
